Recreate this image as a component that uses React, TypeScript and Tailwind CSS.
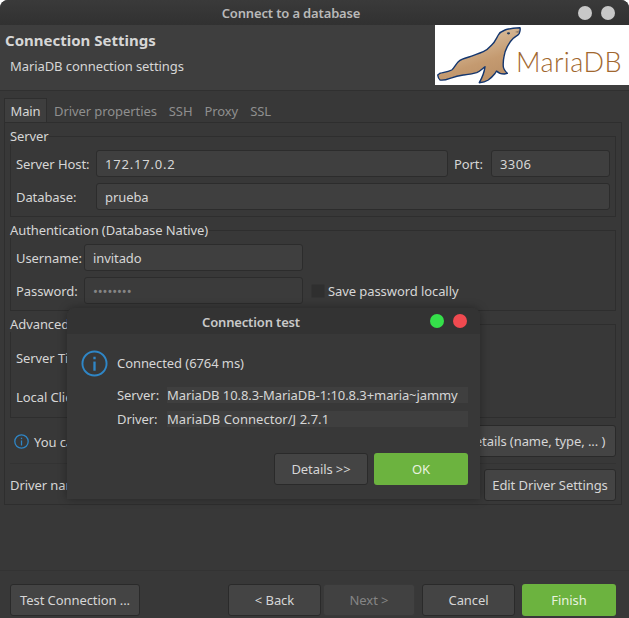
const uiFont = "font-['Noto_Sans',sans-serif] text-[13px] leading-[15px] tracking-[-0.08px] text-[#d6d6d6]";

function Field({ value, className, muted }: { value: string; className: string; muted?: boolean }) {
  return (
    <div className={`h-[27px] flex items-center px-2 pt-[2px] rounded-[3px] border border-[#2c2c2c] ${muted ? 'bg-[#3b3b3b] text-[#858585]' : 'bg-[#3f3f3f]'} ${className}`}>
      {value}
    </div>
  );
}

function Btn({ label, className, green, disabled }: { label: string; className: string; green?: boolean; disabled?: boolean }) {
  const tone = green
    ? 'bg-[#6cb33f] text-[#e8f2df]'
    : disabled
      ? 'bg-[#414141] border border-[#393939] text-[#858585]'
      : 'bg-[#444444] border border-[#2a2a2a]';
  return (
    <div className={`h-[32px] flex items-center justify-center rounded-[3px] whitespace-nowrap overflow-hidden ${tone} ${className}`}>
      {label}
    </div>
  );
}

function InfoIcon({ size, stroke }: { size: number; stroke: number }) {
  return (
    <svg width={size} height={size} viewBox="0 0 28 28" className="shrink-0">
      <circle cx="14" cy="14" r="12.5" fill="none" stroke="#2f86c6" strokeWidth={stroke} />
      <rect x="12.8" y="12" width="2.4" height="9.5" fill="#2f86c6" />
      <rect x="12.8" y="7" width="2.4" height="2.6" fill="#2f86c6" />
    </svg>
  );
}

function MariaLogo() {
  return (
    <div className="w-[194px] h-[60px] bg-white flex items-center overflow-hidden shrink-0">
      <svg width="88" height="60" viewBox="0 0 88 60" className="shrink-0">
        <defs>
          <linearGradient id="seal" x1="0.3" y1="0.2" x2="0.7" y2="1">
            <stop offset="0" stopColor="#d9bd9c" />
            <stop offset="0.55" stopColor="#c49a70" />
            <stop offset="1" stopColor="#b98f66" />
          </linearGradient>
        </defs>
        <path
          d="M85 2.7 C80 3 74 3.4 70 5 C66 6.5 64.5 8 63.3 10 C61 14 60 17 56.7 20 C54 23 51 25.5 48.3 26.7 C43 29 39 30 35 31.7 C30 33 26 34 23.3 36.7 C20.5 39.5 19.5 43 16.7 45 C13 47 8 47.5 5 48.3 L2.7 50 C3 52 3.5 54 5 55 C8 55.5 12 54.5 15 53.3 C20 51.5 24 50.5 28.3 50 C33 49.5 38 49 41.7 47.7 C44.5 46.5 47 44 50 41.7 C49.5 46 47 53 44.3 57.7 C48 57.5 51 56.5 53.3 55 C56 53 58 51 60 48.5 L61.5 46 C63 47.5 66 49 69.3 49 L72.3 48.3 C70 46 68.5 44 68.3 41.7 C68 38 68.3 35 69 31.7 C69.6 28 70.5 25 72.3 21.7 C74 18.5 76 15.5 78.3 13.3 C80.5 11.5 83 10.5 84.3 8.3 C85 6.5 85.5 4.5 85 2.7 Z"
          fill="url(#seal)"
          stroke="#14366e"
          strokeWidth="1.4"
          strokeLinejoin="round"
        />
        <ellipse cx="73.5" cy="8.3" rx="1.6" ry="1.1" fill="#233a5c" />
        <path d="M80 7 L84 5.5 L83.5 8 Z" fill="#8f7a66" />
      </svg>
      <span className="font-['Lato',sans-serif] font-light text-[27px] leading-[30px] tracking-[0.4px] text-[#a1672f] ml-[-7px] mt-[13px]">MariaDB</span>
    </div>
  );
}

function ConnectionDialog() {
  return (
    <div className="absolute left-[67px] top-[308px] w-[413px] h-[191px] rounded-t-[8px] bg-[#383838] shadow-[0_0_10px_rgba(0,0,0,0.35)] flex flex-col">
      <div className="h-[26px] shrink-0 bg-[#333333] rounded-t-[8px] flex items-center pr-[13px]">
        <div className="flex-1 text-center font-semibold tracking-[-0.15px] text-[#c9c9c9] pl-[5px] pt-[2px]">Connection test</div>
        <div className="flex gap-[9px]">
          <div className="w-[14px] h-[14px] rounded-full bg-[#35e04a]" />
          <div className="w-[14px] h-[14px] rounded-full bg-[#f04a50]" />
        </div>
      </div>
      <div className="flex items-center mt-[16px] pl-[14px] h-[26px]">
        <InfoIcon size={27} stroke={2} />
        <span className="ml-[9px]">Connected (6764 ms)</span>
      </div>
      <div className="flex flex-col gap-[8px] mt-[11px] pl-[50px] pr-[12px]">
        <div className="flex items-center h-[16px]">
          <span className="w-[50px]">Server:</span>
          <span className="flex-1 bg-[#3f3f3f] h-[16px] flex items-center whitespace-nowrap">MariaDB 10.8.3-MariaDB-1:10.8.3+maria~jammy</span>
        </div>
        <div className="flex items-center h-[16px]">
          <span className="w-[50px]">Driver:</span>
          <span className="flex-1 bg-[#3f3f3f] h-[16px] flex items-center whitespace-nowrap tracking-[0.04px]">MariaDB Connector/J 2.7.1</span>
        </div>
      </div>
      <div className="flex justify-end gap-[6px] mt-[26px] pr-[12px]">
        <Btn label="Details >>" className="w-[94px]" />
        <Btn label="OK" className="w-[94px]" green />
      </div>
    </div>
  );
}

export default function App() {
  return (
    <div className={`relative w-[629px] h-[618px] bg-[#383838] rounded-t-[8px] overflow-hidden flex flex-col ${uiFont}`}>
      {/* title bar */}
      <div className="h-[25px] shrink-0 bg-linear-to-b from-[#3a3a3a] to-[#313131] flex items-center pr-[14px]">
        <div className="flex-1 text-center font-semibold tracking-[-0.15px] text-[#b9b9b9] pl-[4px] pt-[2px]">Connect to a database</div>
        <div className="flex gap-[9px]">
          <div className="w-[14px] h-[14px] rounded-full bg-[#c8c8c8]" />
          <div className="w-[14px] h-[14px] rounded-full bg-[#c8c8c8]" />
        </div>
      </div>

      {/* wizard header */}
      <div className="h-[66px] shrink-0 bg-[#3e3e3e] border-b border-[#303030] flex justify-between">
        <div className="pl-[5px]">
          <div className="text-[15px] leading-[18px] font-bold tracking-normal mt-[6px]">Connection Settings</div>
          <div className="ml-[5px] mt-[10px]">MariaDB connection settings</div>
        </div>
        <MariaLogo />
      </div>

      {/* tabs */}
      <div className="flex items-end h-[24px] mt-[7px] ml-[4px] shrink-0">
        <div className="h-[24px] w-[43px] pt-[2px] flex items-center justify-center bg-[#3e3e3e] border border-b-0 border-[#2e2e2e]">Main</div>
        <div className="flex items-center h-[24px] pt-[2px] gap-[12px] ml-[7px] text-[#8f8f8f]">
          <span>Driver properties</span>
          <span>SSH</span>
          <span>Proxy</span>
          <span>SSL</span>
        </div>
      </div>

      {/* tab panel */}
      <div className="ml-[4px] mr-[7px] h-[383px] shrink-0 border border-[#2e2e2e] px-[5px] pt-[6px] flex flex-col">
        <fieldset className="h-[88px] border border-[#2e2e2e]">
          <legend className="-ml-px">Server</legend>
          <div className="px-[5px] pt-[6px] flex flex-col gap-[6px]">
            <div className="flex items-center">
              <span className="w-[80px] shrink-0 pt-[2px]">Server Host:</span>
              <Field value="172.17.0.2" className="w-[352px] tracking-[0.8px]" />
              <span className="ml-[6px] w-[37px] pt-[2px]">Port:</span>
              <Field value="3306" className="w-[119px] tracking-[0.4px]" />
            </div>
            <div className="flex items-center">
              <span className="w-[80px] shrink-0 pt-[2px]">Database:</span>
              <Field value="prueba" className="flex-1" />
            </div>
          </div>
        </fieldset>

        <fieldset className="h-[88px] mt-[6px] border border-[#2e2e2e]">
          <legend className="-ml-px tracking-[-0.1px]">Authentication (Database Native)</legend>
          <div className="px-[5px] pt-[6px] flex flex-col gap-[6px]">
            <div className="flex items-center">
              <span className="w-[68px] shrink-0 pt-[2px]">Username:</span>
              <Field value="invitado" className="w-[219px]" />
            </div>
            <div className="flex items-center">
              <span className="w-[68px] shrink-0 pt-[2px]">Password:</span>
              <Field value="••••••••" className="w-[219px]" muted />
              <div className="ml-[8px] w-[14px] h-[14px] rounded-[2px] bg-[#2f2f2f] border border-[#333333]" />
              <span className="ml-[3px] pt-[2px]">Save password locally</span>
            </div>
          </div>
        </fieldset>

        <fieldset className="h-[101px] mt-[6px] border border-[#2e2e2e]">
          <legend className="-ml-px">Advanced</legend>
          <div className="px-[5px] pt-[12px] flex flex-col gap-[12px]">
            <div className="h-[27px] pt-[2px] flex items-center">Server Time Zone:</div>
            <div className="h-[27px] pt-[2px] flex items-center">Local Client:</div>
          </div>
        </fieldset>

        <div className="flex items-center justify-between mt-[7px] pl-[4px]">
          <div className="flex items-center gap-[5px]">
            <InfoIcon size={15} stroke={2.4} />
            <span className="pt-[2px]">You can change</span>
          </div>
          <Btn label="Connection details (name, type, ... )" className="w-[232px]" />
        </div>

        <div className="border-t border-[#333333] mt-[6px]" />

        <div className="flex items-center justify-between mt-[5px]">
          <span>Driver name: MariaDB</span>
          <Btn label="Edit Driver Settings" className="w-[132px]" />
        </div>
      </div>

      {/* footer */}
      <div className="mt-auto h-[48px] shrink-0 border-t border-[#333333] pt-[13px] pl-[10px] flex">
        <Btn label="Test Connection ..." className="w-[130px]" />
        <Btn label="< Back" className="w-[93px] ml-[88px]" />
        <Btn label="Next >" className="w-[92px] ml-[2px]" disabled />
        <Btn label="Cancel" className="w-[93px] ml-[7px]" />
        <Btn label="Finish" className="w-[94px] ml-[7px]" green />
      </div>

      <ConnectionDialog />
    </div>
  );
}
